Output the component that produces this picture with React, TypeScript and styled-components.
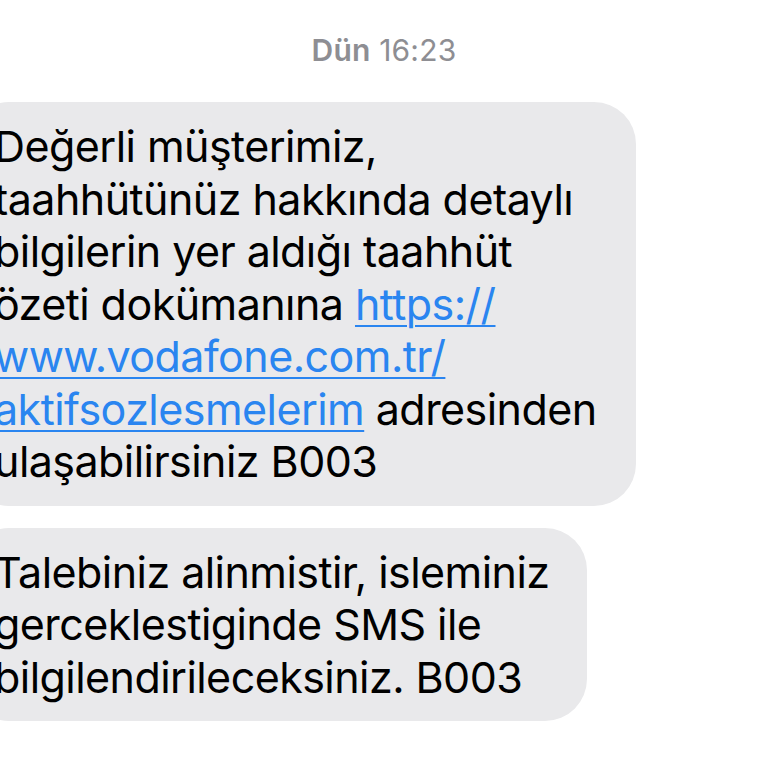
import React from "react";
import styled, { createGlobalStyle } from "styled-components";

const Global = createGlobalStyle`
  html, body { margin: 0; padding: 0; background: #ffffff; }
  body { font-family: Inter, "Noto Sans", "Liberation Sans", sans-serif; overflow: hidden; }
`;

const Screen = styled.div`
  width: 768px;
  height: 768px;
  display: flex;
  flex-direction: column;
  align-items: flex-start;
  padding-top: 28px;
  box-sizing: border-box;
  overflow: hidden;
`;

const Stamp = styled.div`
  align-self: stretch;
  text-align: center;
  color: #8e8e93;
  font-size: 30px;
  line-height: 44px;
  letter-spacing: 0.2px;
  margin-bottom: 30px;
  b { font-weight: 600; }
`;

const Bubble = styled.div<{ $w: number }>`
  width: ${(p) => p.$w}px;
  margin-left: -33px;
  box-sizing: border-box;
  padding: 18px 0 18px 27px;
  background: #e9e9eb;
  border-radius: 42px;
  color: #000;
  font-size: 43px;
  line-height: 52.5px;
  letter-spacing: -0.55px;
  white-space: nowrap;
  & + & { margin-top: 22px; }
`;

const Link = styled.a`
  color: #2a85f0;
  text-decoration: underline;
  text-decoration-thickness: 2px;
  text-underline-offset: 5px;
`;

export default function App() {
  return (
    <>
      <Global />
      <Screen>
        <Stamp>
          <b>Dün</b> 16:23
        </Stamp>
        <Bubble $w={669}>
          Değerli müşterimiz,
          <br />
          taahhütünüz hakkında detaylı
          <br />
          bilgilerin yer aldığı taahhüt
          <br />
          özeti dokümanına <Link>https://</Link>
          <br />
          <Link>www.vodafone.com.tr/</Link>
          <br />
          <Link>aktifsozlesmelerim</Link> adresinden
          <br />
          ulaşabilirsiniz B003
        </Bubble>
        <Bubble $w={620}>
          Talebiniz alinmistir, isleminiz
          <br />
          gerceklestiginde SMS ile
          <br />
          bilgilendirileceksiniz. B003
        </Bubble>
      </Screen>
    </>
  );
}
